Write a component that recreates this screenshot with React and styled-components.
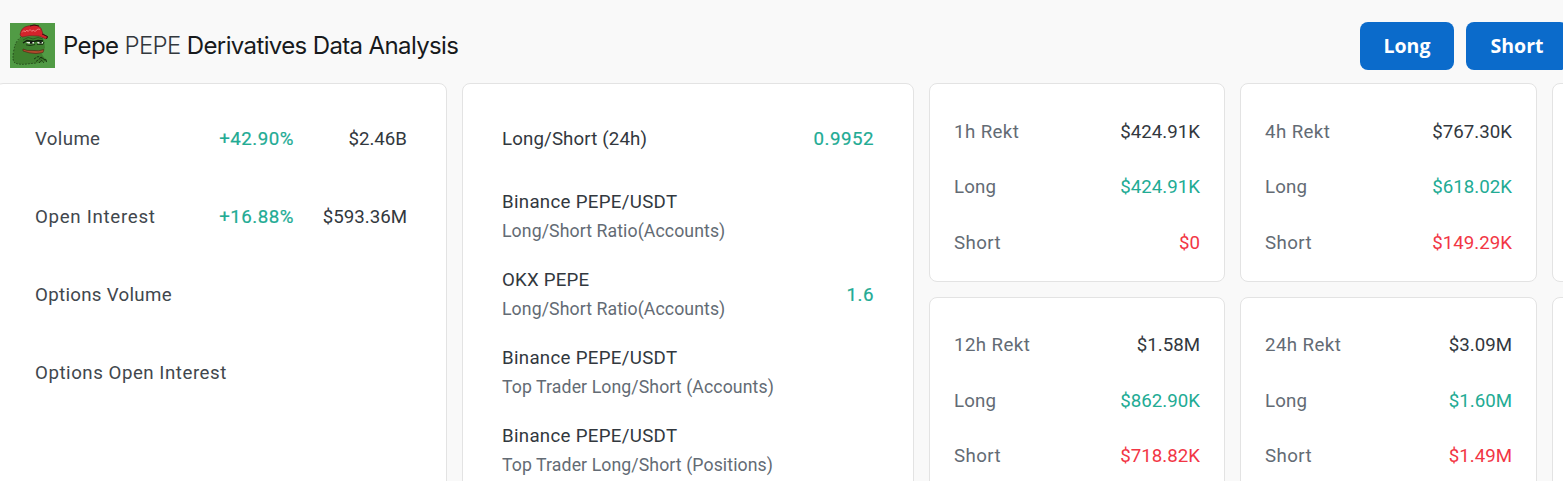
import React from 'react';
import styled, { createGlobalStyle } from 'styled-components';

const GlobalStyle = createGlobalStyle`
	* {
		box-sizing: border-box;
	}
	html, body {
		margin: 0;
		padding: 0;
		overflow: hidden;
		background: #f9f9f9;
	}
`;

const colors = {
	text: '#32383e',
	label: '#41474d',
	muted: '#636b74',
	up: '#22ab94',
	down: '#f23645',
};

const Page = styled.div`
	width: 1563px;
	height: 481px;
	overflow: hidden;
	font-family: Roboto, 'Liberation Sans', sans-serif;
	font-size: 18.7px;
	color: ${colors.text};
`;

const Header = styled.header`
	display: flex;
	align-items: center;
	justify-content: space-between;
	width: 1568px;
	height: 83px;
	padding: 8px 0 0 10px;
`;

const TitleBox = styled.div`
	display: flex;
	align-items: center;
	gap: 8px;
`;

const Title = styled.h1`
	margin: 0;
	font-family: Inter, sans-serif;
	font-size: 24px;
	font-weight: 400;
	line-height: 32px;
	letter-spacing: -0.63px;
	color: #171a1c;
	white-space: nowrap;
	span {
		color: ${colors.text};
		font-weight: 300;
	}
`;

const Buttons = styled.div`
	display: flex;
	gap: 12px;
`;

const Button = styled.button`
	width: ${(props) => props.$width}px;
	height: 48px;
	padding: 0;
	border: none;
	border-radius: 8px;
	background: #0b6bcb;
	color: #fff;
	font-family: 'Open Sans', sans-serif;
	font-size: 19.5px;
	font-weight: 700;
	line-height: 48px;
`;

const Grid = styled.main`
	display: grid;
	grid-template-columns: 452px 452px 296px 297px 296px;
	grid-template-rows: 198.5px 198.5px;
	gap: 15px;
	margin-left: -5px;
	width: 1853px;
`;

const Card = styled.section`
	border: 1px solid #e3e3e3;
	border-radius: 8px;
	background: #fff;
`;

const TallCard = styled(Card)`
	grid-row: span 2;
	padding: 16px 39px 0;
`;

const RektCard = styled(Card)`
	padding: 20px 24px 0;
`;

const Row = styled.div`
	display: flex;
	align-items: center;
	height: ${(props) => props.$height || 78}px;
	white-space: nowrap;
`;

const Label = styled.div`
	flex: 1;
	color: ${(props) => props.$color || colors.label};
	letter-spacing: ${(props) => props.$track || 0}px;
`;

const Name = styled.div`
	color: ${colors.text};
	line-height: 28px;
	letter-spacing: ${(props) => props.$track || 0}px;
`;

const Sub = styled.div`
	color: ${colors.muted};
	font-size: 17.7px;
	line-height: 30px;
	letter-spacing: 0.09px;
`;

const Value = styled.div`
	min-width: ${(props) => props.$width || 0}px;
	color: ${(props) => props.$color || colors.text};
	text-align: right;
`;

const Change = styled(Value)`
	color: ${colors.up};
	letter-spacing: 0.5px;
	-webkit-text-stroke: 0.2px ${colors.up};
`;

const volumes = [
	{ label: 'Volume', track: 0.35, change: '+42.90%', value: '$2.46B' },
	{ label: 'Open Interest', track: 0.7, change: '+16.88%', value: '$593.36M' },
	{ label: 'Options Volume', track: 0.31 },
	{ label: 'Options Open Interest', track: 0.53 },
];

const ratios = [
	{ name: 'Long/Short (24h)', track: 0.13, value: '0.9952' },
	{ name: 'Binance PEPE/USDT', track: 0.3, sub: 'Long/Short Ratio(Accounts)' },
	{ name: 'OKX PEPE', track: 0.2, sub: 'Long/Short Ratio(Accounts)', value: '1.6' },
	{ name: 'Binance PEPE/USDT', track: 0.3, sub: 'Top Trader Long/Short (Accounts)' },
	{ name: 'Binance PEPE/USDT', track: 0.3, sub: 'Top Trader Long/Short (Positions)' },
];

const rekts = [
	{ time: '1h', total: '$424.91K', long: '$424.91K', short: '$0' },
	{ time: '4h', total: '$767.30K', long: '$618.02K', short: '$149.29K' },
	{ time: '12h', total: '$1.58M', long: '$862.90K', short: '$718.82K' },
	{ time: '24h', total: '$3.09M', long: '$1.60M', short: '$1.49M' },
];

function PepeLogo() {
	return (
		<svg width="45" height="45" viewBox="0 0 45 45">
			<rect width="45" height="45" fill="#519b45" />
			<path d="M12 14Q5 18 3.5 29Q2 38 5 40Q10 42 17 41L29 40L37 38L33 33L31 29L35 25L34 17L29 13Z" fill="#3f812f" />
			<path d="M11 14Q5 18 3.5 29Q2 38 5 40Q10 42 17 41L26 40" fill="none" stroke="#1f4016" strokeWidth=".9" strokeDasharray="1.5 1.5" />
			<path d="M13 17L18 14.5L23 16L28 14.5L33 16" fill="none" stroke="#2a5a1f" strokeWidth="1" />
			<path d="M13 20L17 17.5L24 18.5L28 17.5L33 18" fill="none" stroke="#101c0d" strokeWidth="1.4" />
			<path d="M16 19H24V20.6H18ZM27 19H33V20.4H28Z" fill="#e8eee1" />
			<path d="M20 18.5h2.4v2.2H20zM29.5 18.5h2.2v2h-2.2z" fill="#111" />
			<path d="M16 21.8L20 22.6L25 21.5M27 21.5L33 21.5L34 19" fill="none" stroke="#1b3214" strokeWidth=".9" />
			<path d="M13 26Q17 28.2 22 27.4Q29 28.6 34 26.5L33 29.5Q26 31.5 19 29.8L13 28Z" fill="#b14a2d" stroke="#4b2412" strokeWidth=".6" />
			<path d="M24 36L28 33.5L33 35.5L37 39M26 38.5L30 35.5L34 40M29 40L31.5 37M31 34L35 37M35 36L37.5 38" fill="none" stroke="#17300f" strokeWidth=".9" strokeDasharray="2.5 .8" />
			<path d="M10 12Q11 4 18 3L25 2Q31 3 32 8L33 11L38 14L36 16L29 13Q19 12 12 14Z" fill="#d3232b" stroke="#711a1c" strokeWidth=".6" />
			<path d="M32 11L37.5 13.5L36.5 16M20 3L24 2L29 3" fill="none" stroke="#35100e" strokeWidth="1" />
			<path d="M12 9.5L14 7.5L15 9L17 7L18 8.5L20 6.5L22 8.5L23 7L25 8.5L28 6L30 6.5" fill="none" stroke="#ee8d89" strokeWidth=".8" />
		</svg>
	);
}

function RektBox({ item }) {
	return (
		<RektCard>
			<Row $height={55.5}>
				<Label $color={colors.muted} $track={0.4}>{item.time} Rekt</Label>
				<Value>{item.total}</Value>
			</Row>
			<Row $height={55.5}>
				<Label $color={colors.muted} $track={0.15}>Long</Label>
				<Value $color={colors.up}>{item.long}</Value>
			</Row>
			<Row $height={55.5}>
				<Label $color={colors.muted} $track={0.4}>Short</Label>
				<Value $color={colors.down}>{item.short}</Value>
			</Row>
		</RektCard>
	);
}

export default function App() {
	return (
		<Page>
			<GlobalStyle />
			<Header>
				<TitleBox>
					<PepeLogo />
					<Title>
						Pepe <span>PEPE</span> Derivatives Data Analysis
					</Title>
				</TitleBox>
				<Buttons>
					<Button $width={94}>Long</Button>
					<Button $width={102}>Short</Button>
				</Buttons>
			</Header>
			<Grid>
				<TallCard>
					{volumes.map((item) => (
						<Row key={item.label}>
							<Label $track={item.track}>{item.label}</Label>
							{item.change && <Change>{item.change}</Change>}
							{item.value && <Value $width={113}>{item.value}</Value>}
						</Row>
					))}
				</TallCard>
				<TallCard>
					{ratios.map((item, idx) => (
						<Row key={idx}>
							<Label>
								<Name $track={item.track}>{item.name}</Name>
								{item.sub && <Sub>{item.sub}</Sub>}
							</Label>
							{item.value && <Change>{item.value}</Change>}
						</Row>
					))}
				</TallCard>
				<RektBox item={rekts[0]} />
				<RektBox item={rekts[1]} />
				<Card />
				<RektBox item={rekts[2]} />
				<RektBox item={rekts[3]} />
				<Card />
			</Grid>
		</Page>
	);
}
